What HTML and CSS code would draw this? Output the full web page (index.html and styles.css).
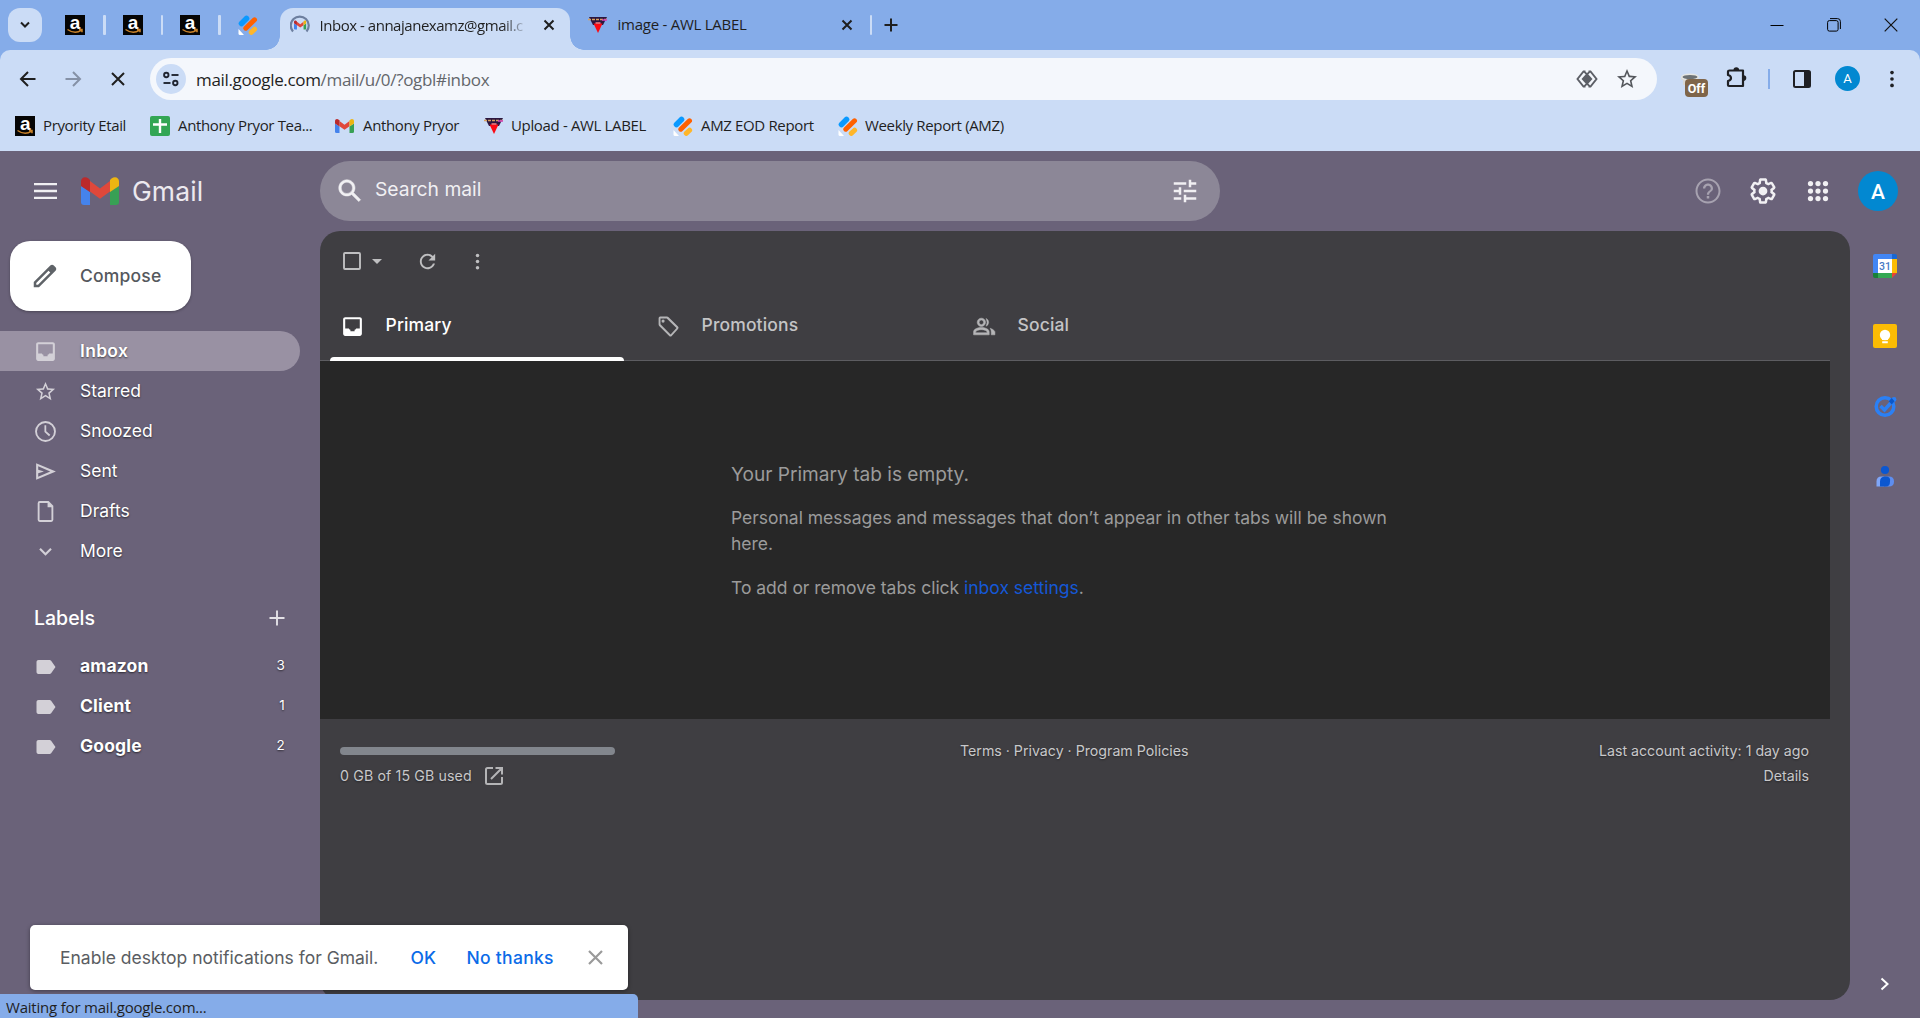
FILE: index.html
```html
<!DOCTYPE html>
<html>
<head>
<meta charset="utf-8">
<title>Inbox - annajanexamz@gmail.com</title>
<link rel="stylesheet" href="styles.css">
</head>

<body>

<svg class="defs" width="0" height="0">
<symbol id="i-amazon" viewBox="0 0 20 20">
<rect width="20" height="20" fill="#050505"/>
<text x="10" y="13.5" text-anchor="middle" font-family="Liberation Sans, sans-serif" font-weight="700" font-size="19" fill="#ffffff">a</text>
<path d="M2.5,14.500q7.500,5.200 14,.6M14,14.600h3v2.600" stroke="#c9822a" stroke-width="1.500" fill="none"/>
</symbol>
<symbol id="i-jot" viewBox="0 0 20 20">
<path d="M3.500,8.500L8.500,3.500" stroke="#0a99ff" stroke-width="5.500" stroke-linecap="round"/>
<path d="M7.800,13.200L16.500,4.800" stroke="#ff6100" stroke-width="5" stroke-linecap="round"/>
<path d="M13.200,17.400L16.600,14.200" stroke="#ffb629" stroke-width="5" stroke-linecap="round"/>
<path d="M.5,14v4.500q0,1.500 1.500,1.500h4z" fill="#ffffff"/>
</symbol>
<symbol id="i-awl" viewBox="0 0 20 20">
<path d="M1,2h18l-4,8h-10z" fill="#2b1740"/>
<path d="M0,4.500h20" stroke="#d8a060" stroke-width="1.600" stroke-dasharray="3 1"/>
<path d="M14,5h5" stroke="#d040c0" stroke-width="1.500"/>
<path d="M5.500,8.500h9l-4.500,9.500z" fill="#fb0a14"/>
<path d="M7.500,8h5" stroke="#ff8080" stroke-width="1.500"/>
</symbol>
<symbol id="i-gmail" viewBox="0 0 38 28">
<path d="M0,9l9,6v13H3q-3,0-3-3z" fill="#4583ec"/>
<path d="M38,9l-9,6v13h6q3,0 3-3z" fill="#38a055"/>
<path d="M9,4l10,7.500L29,4v10.500l-10,7.200L9,14.500z" fill="#e0483a"/>
<path d="M0,9V4.500C0,.5 4-1.300 7.500,1.500L9,3v12L0,9z" fill="#bb2a2c"/>
<path d="M38,9V4.500C38,.5 34-1.300 30.500,1.500L29,3v12L38,9z" fill="#edb512"/>
</symbol>
<symbol id="i-close" viewBox="0 0 12 12">
<path d="M1.500,1.500l9,9M10.500,1.500l-9,9" stroke="currentColor" stroke-width="2" fill="none"/>
</symbol>
<symbol id="i-label" viewBox="0 0 24 24">
<path d="M17.630,5.840C17.270,5.330 16.670,5 16,5L5,5.010C3.900,5.010 3,5.900 3,7v10c0,1.100.9,1.990 2,1.990L16,19c.67,0 1.270-.33 1.630-.84L22,12l-4.370-6.160z"/>
</symbol>
<symbol id="i-star" viewBox="0 0 24 24">
<path d="M22,9.240l-7.190-.62L12,2 9.190,8.630 2,9.240l5.460,4.730L5.820,21 12,17.270 18.180,21l-1.630-7.030L22,9.240zM12,15.400l-3.760,2.270 1-4.280-3.320-2.880 4.380-.38L12,6.100l1.710,4.040 4.380.38-3.320,2.880 1,4.280L12,15.400z"/>
</symbol>
<symbol id="i-inbox" viewBox="0 0 24 24">
<path d="M19,3H5C3.900,3 3,3.900 3,5v14c0,1.100.9,2 2,2h14c1.100,0 2-.9 2-2V5c0-1.100-.9-2-2-2zM19,14h-3.500q-.5,1.200-1.500,1.200V16.500h-4V15.200q-1,0-1.500-1.200H5V5h14z"/>
</symbol>
<symbol id="i-dots" viewBox="0 0 24 24">
<circle cx="12" cy="5" r="2"/><circle cx="12" cy="12" r="2"/><circle cx="12" cy="19" r="2"/>
</symbol>
</svg>

<div class="tabstrip">
<div class="tab-search"><svg width="12" height="12" viewBox="0 0 12 12"><path d="M2,3.500l4,4 4-4" fill="none" stroke="#1f1f1f" stroke-width="2"/></svg></div>
<svg class="pinned first" width="20" height="20"><use href="#i-amazon"/></svg>
<div class="tab-sep"></div>
<svg class="pinned" width="20" height="20"><use href="#i-amazon"/></svg>
<div class="tab-sep"></div>
<svg class="pinned" width="20" height="20"><use href="#i-amazon"/></svg>
<div class="tab-sep"></div>
<svg class="pinned" width="20" height="20"><use href="#i-jot"/></svg>

<div class="tab active">
<svg width="20" height="20" viewBox="0 0 20 20"><path d="M3,16.500A9,9 0 1 1 16.500,16.500" fill="none" stroke="#6d7f9f" stroke-width="2.200"/><svg x="4" y="5" width="12.500" height="10"><use href="#i-gmail"/></svg></svg>
<span class="tab-title fade">Inbox - annajanexamz@gmail.c</span>
<svg class="tab-close" width="12" height="12"><use href="#i-close"/></svg>
</div>

<div class="tab idle">
<svg width="20" height="20"><use href="#i-awl"/></svg>
<span class="tab-title">image - AWL LABEL</span>
<svg class="tab-close" width="12" height="12"><use href="#i-close"/></svg>
</div>
<div class="tab-sep last"></div>
<svg class="new-tab" width="14" height="14" viewBox="0 0 14 14"><path d="M7,.5v13M.5,7h13" stroke="#1f1f1f" stroke-width="2"/></svg>

<div class="window-buttons">
<svg width="14" height="14" viewBox="0 0 14 14"><path d="M.5,7.500h13" stroke="#000000"/></svg>
<svg width="14" height="14" viewBox="0 0 14 14"><rect x=".6" y="2.600" width="10.500" height="10.500" rx="1.800" fill="none" stroke="#000000"/><path d="M3,.6h7.500q2.900,0 2.900,2.900v7.500" fill="none" stroke="#000000"/></svg>
<svg width="14" height="14" viewBox="0 0 14 14"><path d="M.7,.7l12.600,12.600M13.300,.7L.7,13.300" stroke="#111111" stroke-width="1.200"/></svg>
</div>
</div>

<div class="toolbar">
<svg class="nav-icon back" width="18" height="18" viewBox="0 0 18 18"><path d="M16.500,9H2.500M9,2L2,9l7,7" fill="none" stroke="#1f1f1f" stroke-width="2"/></svg>
<svg class="nav-icon forward" width="18" height="18" viewBox="0 0 18 18"><path d="M1.500,9h14M9,2l7,7-7,7" fill="none" stroke="#8591a6" stroke-width="2"/></svg>
<svg class="nav-icon stop" width="18" height="18" viewBox="0 0 18 18"><path d="M3,3l12,12M15,3L3,15" fill="none" stroke="#1f1f1f" stroke-width="2"/></svg>

<div class="omnibox">
<div class="site-info"><svg width="18" height="18" viewBox="0 0 18 18"><g fill="none" stroke="#1f2430" stroke-width="1.900"><circle cx="4.300" cy="5" r="2.200"/><path d="M9.500,5h7"/><circle cx="13.300" cy="13" r="2.200"/><path d="M1.500,13h7"/></g></svg></div>
<div class="url">mail.google.com<span>/mail/u/0/?ogbl#inbox</span></div>
<svg class="password" width="22" height="22" viewBox="0 0 22 22"><path d="M9.500,3.500H7.500L1.500,11l6,7.500h2M12.500,3.500h2L20.500,11l-6,7.500h-2M8.500,3.800L11,6.300l2.500-2.500M8.500,18.200L11,15.700l2.500,2.500" fill="none" stroke="#5c5f66" stroke-width="1.900"/><path d="M11,5L16.500,11 11,17 5.500,11z" fill="#5c5f66"/></svg>
<svg class="bookmark" width="24" height="24" fill="#54575c"><use href="#i-star"/></svg>
</div>

<div class="extension">
<svg width="20" height="16" viewBox="0 0 20 16"><path d="M1,4v3h2v5h3l1-5h11V4z" fill="#d9d9d6"/><ellipse cx="10" cy="4" rx="9" ry="3.500" fill="#e6e6e2"/><ellipse cx="10" cy="4" rx="7.500" ry="2" fill="#6d7275"/></svg>
<span class="badge">Off</span>
</div>
<svg class="puzzle" width="24" height="24" viewBox="0 0 24 24"><path d="M4.500,4.500h13.500v15.500H4q-1,0-1-1v-4q3-.7 3-3t-3-3v-3.500q0-1 1.500-1z" fill="none" stroke="#1f2024" stroke-width="2.200" stroke-linejoin="round"/><path d="M8.500,4a2.800,2.800 0 0 1 5.600,0zM18.500,9.300a2.800,2.800 0 0 1 0,5.600z" fill="#1f2024"/></svg>
<div class="toolbar-sep"></div>
<svg class="side-toggle" width="18" height="18" viewBox="0 0 18 18"><rect x="1" y="1" width="16" height="16" rx="1.500" fill="none" stroke="#1f2024" stroke-width="2"/><rect x="11" y="1" width="6" height="16" fill="#1f2024"/></svg>
<div class="profile">A</div>
<svg class="menu" width="22" height="22" fill="#1f2024"><use href="#i-dots"/></svg>
</div>

<div class="bookmarks">
<div class="bm etail"><svg width="20" height="20"><use href="#i-amazon"/></svg><span>Pryority Etail</span></div>
<div class="bm team"><svg width="20" height="20" viewBox="0 0 20 20"><rect width="20" height="20" rx="2" fill="#33a654"/><path d="M10,3v14M3,8.500h14" stroke="#ffffff" stroke-width="2.400"/></svg><span>Anthony Pryor Tea...</span></div>
<div class="bm pryor"><svg width="19" height="14"><use href="#i-gmail"/></svg><span>Anthony Pryor</span></div>
<div class="bm upload"><svg width="20" height="20"><use href="#i-awl"/></svg><span>Upload - AWL LABEL</span></div>
<div class="bm eod"><svg width="20" height="20"><use href="#i-jot"/></svg><span>AMZ EOD Report</span></div>
<div class="bm weekly"><svg width="20" height="20"><use href="#i-jot"/></svg><span>Weekly Report (AMZ)</span></div>
</div>

<div class="app">

<div class="header">
<svg class="hamburger" width="23" height="16" viewBox="0 0 23 16"><path d="M0,1.200h23M0,8h23M0,14.800h23" stroke="#f0eff2" stroke-width="2.300"/></svg>
<svg class="logo" width="38" height="28"><use href="#i-gmail"/></svg>
<span class="logo-text">Gmail</span>

<div class="search">
<svg width="30" height="30" viewBox="0 0 24 24" fill="#f1f0f3" stroke="#f1f0f3" stroke-width=".4"><path d="M20.490,19l-5.730-5.730C15.530,12.200 16,10.910 16,9.500 16,5.910 13.090,3 9.500,3S3,5.910 3,9.500 5.910,16 9.500,16c1.410,0 2.700-.47 3.770-1.240L19,20.490 20.490,19zM5,9.500C5,7.010 7.010,5 9.500,5S14,7.010 14,9.500 11.990,14 9.500,14 5,11.990 5,9.500z"/></svg>
<span class="placeholder">Search mail</span>
<svg width="30" height="30" viewBox="0 0 24 24" fill="#f1f0f3"><path d="M3,17v2h6v-2H3zM3,5v2h10V5H3zm10,16v-2h8v-2h-8v-2h-2v6h2zM7,9v2H3v2h4v2h2V9H7zm14,4v-2H11v2h10zm-6-4h2V7h4V5h-4V3h-2v6z"/></svg>
</div>

<div class="header-tools">
<svg class="help" width="30" height="30" viewBox="0 0 24 24" fill="#a7a2b0"><path d="M11,18h2v-2h-2v2zm1-16C6.480,2 2,6.480 2,12s4.480,10 10,10 10-4.480 10-10S17.520,2 12,2zm0,18.400c-4.630,0-8.400-3.770-8.400-8.400S7.370,3.600 12,3.600s8.400,3.770 8.400,8.400-3.770,8.400-8.400,8.400zm0-14.400c-2.210,0-4,1.790-4,4h1.800c0-1.200 1-2.200 2.200-2.200s2.200,1 2.200,2.200c0,2-3.100,1.750-3.100,5h1.800c0-2.250 3.100-2.500 3.100-5 0-2.210-1.790-4-4-4z"/></svg>
<svg width="30" height="30" viewBox="0 0 24 24" fill="#f1f0f3"><path d="M13.850,22.250h-3.700c-.74,0-1.360-.54-1.450-1.270l-.27-1.890c-.27-.14-.53-.29-.79-.46l-1.800.72c-.7.260-1.470-.03-1.810-.65L2.200,15.530c-.35-.66-.2-1.440.36-1.880l1.530-1.190c-.01-.15-.02-.3-.02-.46 0-.15.010-.31.020-.46l-1.520-1.190c-.59-.45-.74-1.260-.37-1.880l1.850-3.190c.34-.62 1.110-.9 1.790-.63l1.810.73c.26-.17.520-.32.780-.46l.27-1.910c.09-.7.710-1.250 1.440-1.250h3.700c.74,0 1.360.54 1.450,1.270l.27,1.890c.27.140.53.290.79.460l1.800-.72c.71-.26 1.480.03 1.820.65l1.840,3.180c.36.660.2,1.440-.36,1.880l-1.520,1.190c.01.15.020.3.020.46s-.01.31-.02.460l1.520,1.190c.56.450.72,1.230.37,1.860l-1.860,3.220c-.34.620-1.110.9-1.800.63l-1.800-.72c-.26.170-.52.320-.78.460l-.27,1.910c-.1.680-.72,1.220-1.460,1.220zm-3.230-2h2.760l.37-2.550.53-.22c.44-.18.880-.44 1.340-.78l.45-.34 2.380.96 1.380-2.400-2.030-1.580.07-.56c.03-.26.060-.51.060-.78s-.03-.53-.06-.78l-.07-.56 2.030-1.580-1.390-2.400-2.390.96-.45-.35c-.42-.32-.87-.58-1.330-.77l-.52-.22-.37-2.550h-2.760l-.37,2.550-.53.210c-.44.190-.88.440-1.340.79l-.45.330-2.380-.95-1.390,2.390 2.030,1.580-.07.560a7,7 0 0 0-.06.790c0,.26.020.53.060.78l.07.560-2.030,1.580 1.380,2.400 2.390-.96.450.350c.43.330.86.580 1.330.77l.53.220z"/><circle cx="12" cy="12" r="3.500"/></svg>
<svg width="30" height="30" viewBox="0 0 24 24" fill="#f1f0f3"><circle cx="6" cy="6" r="2.100"/><circle cx="12" cy="6" r="2.100"/><circle cx="18" cy="6" r="2.100"/><circle cx="6" cy="12" r="2.100"/><circle cx="12" cy="12" r="2.100"/><circle cx="18" cy="12" r="2.100"/><circle cx="6" cy="18" r="2.100"/><circle cx="12" cy="18" r="2.100"/><circle cx="18" cy="18" r="2.100"/></svg>
<div class="account">A</div>
</div>
</div>

<div class="content">

<div class="sidebar">
<div class="compose">
<svg width="30" height="30" viewBox="0 0 24 24" fill="#5f6368"><path d="M20.410,4.940l-1.350-1.350c-.78-.78-2.050-.78-2.830,0L3,16.820V21h4.180L20.410,7.770c.79-.78.790-2.050 0-2.830zm-14,14.120L5,19v-1.360l9.820-9.820 1.410,1.410-9.820,9.830z"/></svg>
<span>Compose</span>
</div>

<div class="nav">
<div class="row selected"><svg width="25" height="25" viewBox="0 0 24 24"><use href="#i-inbox"/></svg><span>Inbox</span></div>
<div class="row"><svg width="23" height="23"><use href="#i-star"/></svg><span>Starred</span></div>
<div class="row"><svg width="25" height="25" viewBox="0 0 24 24"><path d="M12,2a10,10 0 1 0 0,20a10,10 0 1 0 0-20zM12,20.200a8.200,8.200 0 1 1 0-16.400a8.200,8.200 0 1 1 0,16.400zM12.700,6H11v6.500l4.400,4 1.200-1.300-3.900-3.500z"/></svg><span>Snoozed</span></div>
<div class="row"><svg width="25" height="25" viewBox="0 0 24 24"><path d="M3,4v16L22,12zM5,7l11.500,5L5,17v-3.300l5.500-1.700L5,10.300z"/></svg><span>Sent</span></div>
<div class="row"><svg width="25" height="25" viewBox="0 0 24 24"><path d="M15,2H6.500q-2,0-2,2v16q0,2 2,2h11q2,0 2-2V6.500zM17.700,20.200H6.300V3.800h7.700V8h3.700z"/></svg><span>Drafts</span></div>
<div class="row"><svg width="25" height="25" viewBox="0 0 24 24"><path d="M16.590,8.590L12,13.170 7.410,8.590 6,10l6,6 6-6z"/></svg><span>More</span></div>
</div>

<div class="labels-head">
<span>Labels</span>
<svg width="16" height="16" viewBox="0 0 16 16"><path d="M8,.5v15M.5,8h15" stroke="#e3e1e6" stroke-width="1.900"/></svg>
</div>
<div class="nav labels">
<div class="row"><svg width="23" height="24" viewBox="0 0 24 24"><use href="#i-label"/></svg><span>amazon</span><span class="count">3</span></div>
<div class="row"><svg width="23" height="24" viewBox="0 0 24 24"><use href="#i-label"/></svg><span>Client</span><span class="count">1</span></div>
<div class="row"><svg width="23" height="24" viewBox="0 0 24 24"><use href="#i-label"/></svg><span>Google</span><span class="count">2</span></div>
</div>
</div>

<div class="panel">
<div class="actions">
<svg width="24" height="24" viewBox="0 0 24 24"><rect x="4" y="4" width="16" height="16" rx="1" fill="none" stroke="#bfbfc1" stroke-width="1.900"/></svg>
<svg class="caret" width="10" height="5" viewBox="0 0 10 5"><path d="M0,0h10L5,5z"/></svg>
<svg class="refresh" width="23" height="23" viewBox="0 0 24 24"><path d="M17.650,6.350C16.200,4.900 14.210,4 12,4c-4.420,0-7.990,3.580-7.990,8s3.570,8 7.990,8c3.730,0 6.840-2.550 7.730-6h-2.080c-.82,2.330-3.040,4-5.650,4-3.310,0-6-2.690-6-6s2.690-6 6-6c1.660,0 3.140.69 4.220,1.780L13,11h7V4l-2.350,2.350z"/></svg>
<svg class="more" width="21" height="21"><use href="#i-dots"/></svg>
</div>

<div class="inbox-tabs">
<div class="inbox-tab current"><svg width="25" height="25"><use href="#i-inbox"/></svg><span>Primary</span></div>
<div class="inbox-tab"><svg width="25" height="25" viewBox="0 0 24 24"><path d="M4,2.500h6.500q1,0 1.600.6l9,9q1.200,1.200 0,2.400l-6,6.500q-1.200,1.200-2.400,0l-9.600-9.600q-.6-.6-.6-1.600V4q0-1.500 1.500-1.500zM4.300,4.300v5.600L14,19.600l5.700-6.200L10.300,4.300z"/><circle cx="6.800" cy="6.800" r="1.500"/></svg><span>Promotions</span></div>
<div class="inbox-tab"><svg width="25" height="25" viewBox="0 0 24 24"><path d="M9,4a4,4 0 1 0 0,8a4,4 0 1 0 0-8zM9,10.200a2.200,2.200 0 1 1 0-4.400a2.200,2.200 0 1 1 0,4.400zM9,13c-4,0-7.500,1.500-7.500,4.300V20h15v-2.700C16.500,14.500 13,13 9,13zM14.500,18h-11v-.8c0-1 2.500-2.200 5.500-2.200s5.500,1.200 5.500,2.200zM13.500,4.300a4,4 0 0 1 0,7.400q2-3.700 0-7.400zM17.500,13.700q3.500,1 4.500,3.300V20h-3.500v-2.700q0-2-1-3.600z" stroke="#b5b5b7" stroke-width=".5"/></svg><span>Social</span></div>
</div>

<div class="empty">
<div class="empty-text">
<h2>Your Primary tab is empty.</h2>
<p>Personal messages and messages that don’t appear in other tabs will be shown here.</p>
<p>To add or remove tabs click <a>inbox settings</a>.</p>
</div>
</div>

<div class="footer">
<div class="storage">
<div class="storage-bar"></div>
<div class="storage-text"><span>0 GB of 15 GB used</span><svg width="18" height="18" viewBox="0 0 18 18"><path d="M8,1H2.500Q1,1 1,2.500v13Q1,17 2.500,17h13q1.500,0 1.500-1.500V10M10.500,1H17v6.500M17,1L6,12" fill="none" stroke="#b4b4b6" stroke-width="2"/></svg></div>
</div>
<div class="terms">Terms · Privacy · Program Policies</div>
<div class="activity">Last account activity: 1 day ago<br>Details</div>
</div>
</div>

<div class="addons">
<svg width="24" height="24" viewBox="0 0 24 24"><path d="M0,2Q0,0 2,0h17v5H5v14H0z" fill="#4286f5"/><path d="M19,0h3q2,0 2,2v3h-5z" fill="#1967d2"/><path d="M19,5h5v14h-5z" fill="#fbbc04"/><path d="M5,19h14v5H5z" fill="#34a853"/><path d="M0,19h5v5H2q-2,0-2-2z" fill="#188038"/><path d="M19,19h5l-5,5z" fill="#ea4335"/><rect x="5" y="5" width="14" height="14" fill="#ffffff"/><text x="12" y="16" text-anchor="middle" font-family="Roboto, sans-serif" font-weight="500" font-size="10.500" fill="#4779c4">31</text></svg>
<svg width="24" height="24" viewBox="0 0 24 24"><rect width="24" height="24" rx="2" fill="#fbbc04"/><circle cx="12" cy="11" r="5.200" fill="#ffffff"/><path d="M9,13h6v3H9zM9.200,17.300h5.600v1.900H9.200z" fill="#ffffff"/></svg>
<svg width="24" height="24" viewBox="0 0 24 24"><circle cx="12" cy="12.500" r="8.800" fill="none" stroke="#2b80f5" stroke-width="3.500"/><path d="M7.500,12l4,4 8-9" fill="none" stroke="#2b80f5" stroke-width="3.500"/><circle cx="21" cy="5.500" r="2.400" fill="#2b80f5"/><path d="M18.700,4l2.800,3.300-2.800,3.200-2.900-3.200z" fill="#0a57c9"/></svg>
<svg width="24" height="24" viewBox="0 0 24 24"><path d="M3.500,22.500v-5q0-5 5-5h3v10z" fill="#7fa6f8"/><path d="M12,12.500h4q5,0 5,5t-5,5h-4z" fill="#5e8ef0"/><path d="M7,22.500v-5q0-5 5.500-5t4.500,5q0,5-4,5z" fill="#0b57d0"/><circle cx="12" cy="6" r="4.100" fill="#0b57d0"/></svg>
<svg class="expand" width="10" height="14" viewBox="0 0 10 14"><path d="M1.500,1.500L7.500,7l-6,5.500" fill="none" stroke="#ffffff" stroke-width="2"/></svg>
</div>

</div>
</div>

<div class="toast">
<span>Enable desktop notifications for Gmail.</span>
<b class="ok">OK</b>
<b>No thanks</b>
<svg width="15" height="15" viewBox="0 0 15 15"><path d="M1,1l13,13M14,1L1,14" stroke="#9a9a9a" stroke-width="2.200"/></svg>
</div>

<div class="status">Waiting for mail.google.com...</div>

</body>
</html>
```
FILE: styles.css
```css
* {
  box-sizing: border-box;
}

body {
  margin: 0;
  width: 1920px;
  height: 1018px;
  overflow: hidden;
  display: flex;
  flex-direction: column;
  background-color: #6a6279;
  font-family: "Open Sans", sans-serif;
  font-size: 15px;
  color: #1f1f1f;
}

svg {
  display: block;
  flex: none;
}

.defs {
  display: none;
}

/* browser tabs */

.tabstrip {
  display: flex;
  align-items: center;
  height: 50px;
  padding-left: 8px;
  background-color: #85ace9;
}

.tab-search {
  width: 34px;
  height: 34px;
  border-radius: 12px;
  background-color: #cbdcf6;
  display: flex;
  align-items: center;
  justify-content: center;
}

.pinned.first {
  margin-left: 23px;
}

.tab-sep {
  width: 2.5px;
  height: 20px;
  margin: 0 17px 0 18px;
  border-radius: 1px;
  background-color: #cbdcf6;
}

.tab-sep.last {
  margin: 0 0 0 17px;
}

.tab {
  display: flex;
  align-items: center;
}

.tab.active {
  position: relative;
  align-self: flex-end;
  width: 290px;
  height: 42px;
  margin-left: 22px;
  padding: 0 15px 8px 10px;
  border-radius: 13px 13px 0 0;
  background-color: #cbdcf6;
}

/* flared bottom corners of the active tab */
.tab.active::before,
.tab.active::after {
  content: "";
  position: absolute;
  bottom: 0;
  width: 14px;
  height: 14px;
}

.tab.active::before {
  left: -14px;
  background: radial-gradient(circle at 0 0, transparent 13.5px, #cbdcf6 14px);
}

.tab.active::after {
  right: -14px;
  background: radial-gradient(circle at 100% 0, transparent 13.5px, #cbdcf6 14px);
}

.tab.idle {
  width: 283px;
  padding: 0 0 0 18px;
}

.tab-title {
  margin: 0 0 2px 10px;
  white-space: nowrap;
  letter-spacing: -0.25px;
}

.tab-title.fade {
  letter-spacing: -0.47px;
  margin-bottom: 1px;
  -webkit-mask-image: linear-gradient(to right, #000 90%, rgba(0, 0, 0, 0.2));
  mask-image: linear-gradient(to right, #000 90%, rgba(0, 0, 0, 0.2));
}

.tab-close {
  margin-left: auto;
}

.new-tab {
  margin-left: 12px;
}

.window-buttons {
  display: flex;
  gap: 43px;
  margin: 0 22px 0 auto;
}

/* toolbar */

.toolbar {
  display: flex;
  align-items: center;
  height: 58px;
  padding-left: 19px;
  background-color: #cbdcf6;
  border-radius: 10px 10px 0 0;
  /* fills the rounded corners with the strip colour */
  box-shadow: 0 -10px 0 0 #85ace9;
  clip-path: inset(0);
}

.nav-icon {
  margin-right: 27px;
}

.nav-icon.stop {
  margin-right: 23px;
}

.omnibox {
  display: flex;
  align-items: center;
  width: 1507px;
  height: 42px;
  padding-left: 6px;
  border-radius: 21px;
  background-color: #f4f7fc;
}

.site-info {
  width: 30px;
  height: 30px;
  border-radius: 50%;
  background-color: #cbdcf6;
  display: flex;
  align-items: center;
  justify-content: center;
}

.url {
  flex: 1;
  margin-left: 10px;
  font-size: 17px;
  letter-spacing: -0.33px;
}

.url span {
  color: #63666b;
}

.password {
  margin-right: 17px;
}

.bookmark {
  margin-right: 18px;
}

.extension {
  position: relative;
  width: 28px;
  height: 36px;
  margin-left: 23px;
  padding-top: 12px;
}

.badge {
  position: absolute;
  left: 5px;
  top: 18px;
  width: 23px;
  height: 18px;
  border-radius: 4px;
  background-color: #7f6549;
  color: #ffffff;
  font: bold 12.5px/19px "Roboto", sans-serif;
  text-align: center;
}

.puzzle {
  margin: 0 0 2px 17px;
}

.toolbar-sep {
  width: 2px;
  height: 20px;
  margin-left: 19px;
  background-color: #85ace9;
}

.side-toggle {
  margin-left: 23px;
}

.profile {
  width: 25px;
  height: 25px;
  margin: 0 0 1px 24px;
  border-radius: 50%;
  background-color: #0288d1;
  color: #ffffff;
  font: 13px/26px "Roboto", sans-serif;
  text-align: center;
}

.menu {
  margin-left: 21px;
}

/* bookmarks bar */

.bookmarks {
  display: flex;
  align-items: center;
  height: 43px;
  padding: 0 0 7px 15px;
  background-color: #cbdcf6;
}

.bm {
  display: flex;
  align-items: center;
  white-space: nowrap;
  letter-spacing: -0.35px;
}

.bm span {
  margin: 0 0 2px 8px;
}

.etail { width: 135px; }
.team { width: 185px; }
.pryor { width: 149px; }
.upload { width: 189px; }
.eod { width: 165px; }

.pryor span {
  margin-left: 9px;
}

.upload span,
.weekly span {
  margin-left: 7px;
}

/* gmail */

.app {
  font-family: "Inter", sans-serif;
  font-size: 17.5px;
  color: #ffffff;
}

.header {
  display: flex;
  align-items: center;
  height: 80px;
  padding-left: 34px;
}

.logo {
  margin-left: 24px;
}

.logo-text {
  width: 188px;
  margin-left: 13px;
  color: #ece9ef;
  font-size: 26.5px;
  letter-spacing: 0.1px;
}

.search {
  display: flex;
  align-items: center;
  width: 900px;
  height: 60px;
  padding: 0 20px 0 15px;
  border-radius: 30px;
  background-color: #8c8797;
}

.placeholder {
  flex: 1;
  margin-left: 10px;
  padding-bottom: 4px;
  color: #f1f0f3;
  font-size: 19.3px;
}

.header-tools {
  display: flex;
  align-items: center;
  gap: 25px;
  margin: 0 22px 0 auto;
}

.account {
  width: 40px;
  height: 40px;
  border-radius: 50%;
  background-color: #0288d1;
  font: 500 21px/42px "Roboto", sans-serif;
  text-align: center;
}

.content {
  display: flex;
  height: 787px;
}

.sidebar {
  width: 320px;
  padding-top: 10px;
}

.compose {
  display: flex;
  align-items: center;
  width: 181px;
  height: 70px;
  margin-left: 10px;
  padding-left: 20px;
  border-radius: 20px;
  background-color: #ffffff;
  color: #55585d;
  font-weight: 500;
  letter-spacing: 0.2px;
  box-shadow: 0 1px 3px rgba(0, 0, 0, 0.3);
}

.compose span {
  margin: 0 0 2px 20px;
}

.nav {
  margin-top: 20px;
}

.row {
  display: flex;
  align-items: center;
  width: 300px;
  height: 40px;
  padding: 0 15px 0 32.5px;
  text-shadow: 0 1px 2px rgba(0, 0, 0, 0.6);
}

.row svg {
  width: 25px;
  margin-top: 1px;
  fill: #d3d0d7;
}

.row span {
  margin: 0 0 2px 22.5px;
}

.selected {
  border-radius: 0 20px 20px 0;
  background-color: #9991a3;
  font-weight: 600;
  letter-spacing: 0.3px;
}

.labels-head {
  display: flex;
  align-items: center;
  justify-content: space-between;
  width: 300px;
  height: 40px;
  margin-top: 27px;
  padding: 0 15px 0 34px;
  font-size: 19.5px;
  font-weight: 500;
}

.labels {
  margin-top: 8px;
  font-weight: 700;
  letter-spacing: 0.15px;
}

.row .count {
  margin-left: auto;
  font-size: 13.5px;
  font-weight: 400;
}

.panel {
  width: 1530px;
  height: 769px;
  border-radius: 20px;
  background-color: #3f3e42;
}

.actions {
  display: flex;
  align-items: center;
  height: 60px;
  padding-left: 20px;
  fill: #bfbfc1;
}

.caret {
  margin-left: 8px;
}

.refresh {
  margin-left: 34px;
}

.more {
  margin-left: 28px;
}

.inbox-tabs {
  display: flex;
  width: 1510px;
  height: 70px;
  border-bottom: 1px solid #5d5d61;
}

.inbox-tab {
  position: relative;
  display: flex;
  align-items: center;
  width: 316px;
  padding-left: 20px;
  color: #c4c4c6;
  fill: #b5b5b7;
  font-weight: 500;
  letter-spacing: 0.15px;
}

.inbox-tab svg {
  margin-top: 1px;
}

.inbox-tab span {
  margin: 0 0 3px 20.5px;
}

.current {
  color: #ffffff;
  fill: #ffffff;
}

.current::after {
  content: "";
  position: absolute;
  left: 10px;
  bottom: -1px;
  width: 294px;
  height: 4px;
  border-radius: 4px 4px 0 0;
  background-color: #ffffff;
}

.empty {
  width: 1510px;
  height: 358px;
  padding: 100px 0 0 411px;
  background-color: #272727;
  color: #9b9b9b;
}

.empty-text {
  width: 690px;
}

.empty h2 {
  margin: 0 0 18px;
  font-size: 19.1px;
  font-weight: 400;
  line-height: 26px;
}

.empty p {
  margin: 0 0 18px;
  line-height: 26px;
  letter-spacing: -0.02px;
}

.empty a {
  color: #1558d6;
}

.footer {
  display: flex;
  width: 1510px;
  padding: 19px 21px 0 20px;
  color: #c8c8ca;
  font-size: 14.2px;
  line-height: 25px;
  text-shadow: 0 1px 2px rgba(0, 0, 0, 0.4);
}

.storage {
  width: 620px;
  padding-top: 9px;
}

.storage-bar {
  width: 275px;
  height: 8px;
  border-radius: 4px;
  background-color: #82868d;
}

.storage-text {
  display: flex;
  align-items: center;
  gap: 13px;
  margin-top: 8px;
  letter-spacing: 0.12px;
}

.activity {
  margin-left: auto;
  text-align: right;
}

.addons {
  flex: 1;
  display: flex;
  flex-direction: column;
  align-items: center;
  gap: 46px;
  padding: 23px 0 27px;
}

.expand {
  margin-top: auto;
}

.toast {
  position: absolute;
  left: 30px;
  top: 925px;
  width: 598px;
  height: 65px;
  padding: 0 25px 0 30px;
  display: flex;
  align-items: center;
  border-radius: 5px;
  background-color: #ffffff;
  color: #5a5d62;
  font-family: "Inter", sans-serif;
  font-size: 17.5px;
  box-shadow: 0 1px 4px rgba(0, 0, 0, 0.4);
}

.toast b {
  margin-left: 30px;
  color: #0b6be8;
  font-weight: 500;
  letter-spacing: 0.3px;
}

.toast .ok {
  margin-left: 32px;
}

.toast svg {
  margin-left: auto;
}

.status {
  position: absolute;
  left: 0;
  top: 994px;
  width: 638px;
  height: 24px;
  padding-left: 6px;
  border-radius: 0 5px 0 0;
  background-color: #85ace9;
  line-height: 26px;
  letter-spacing: -0.2px;
}
```
